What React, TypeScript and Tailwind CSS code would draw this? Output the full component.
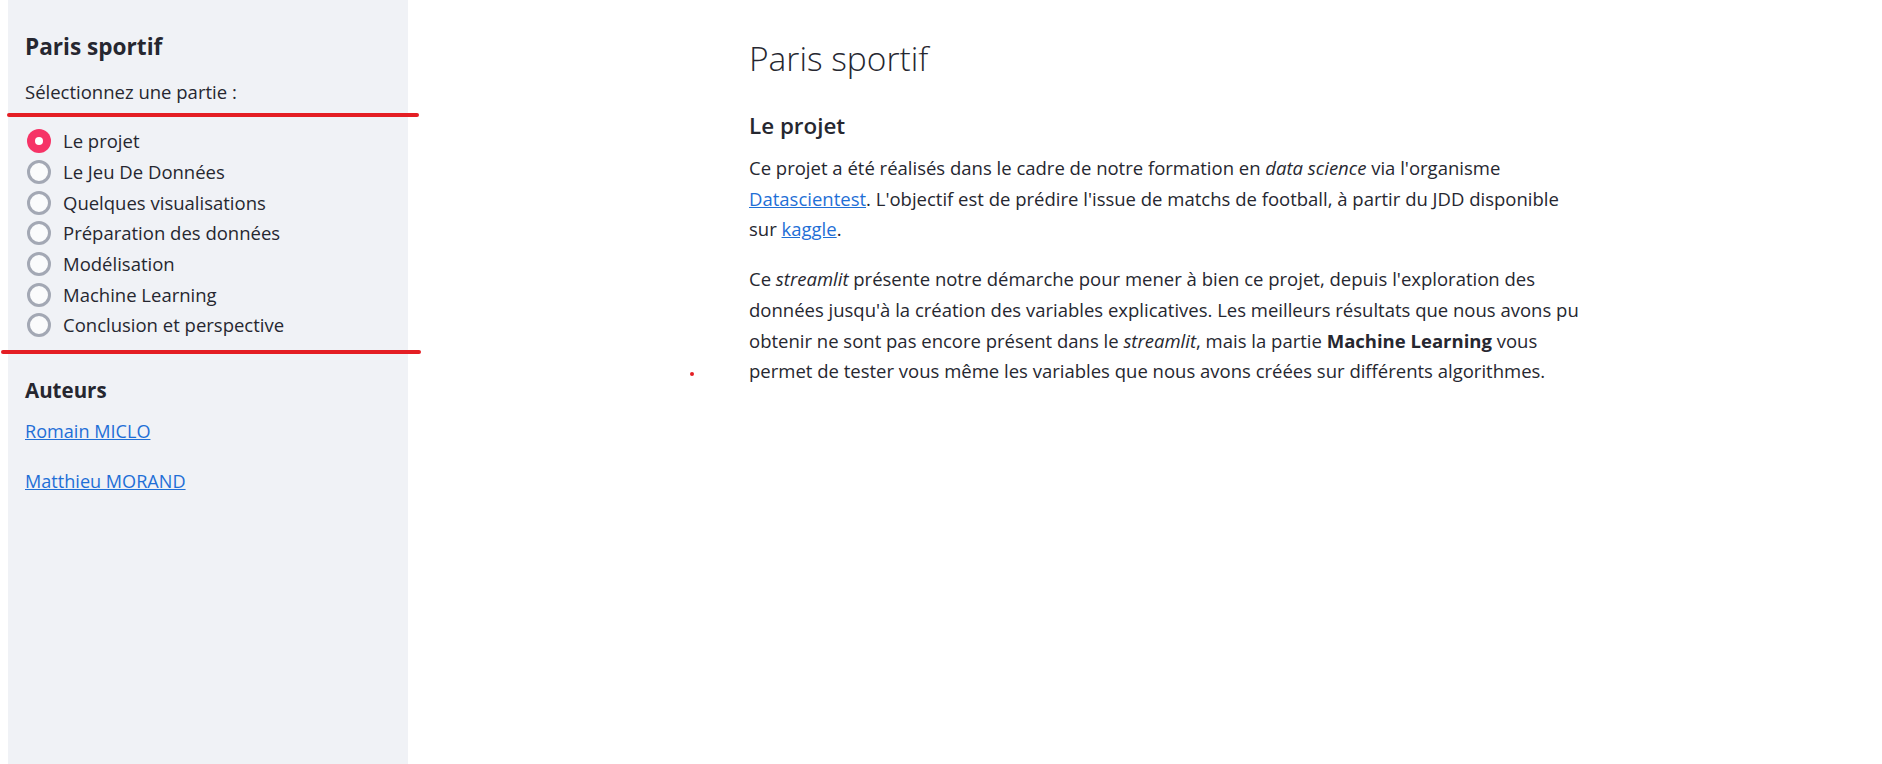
import React from "react";

const items = [
  "Le projet",
  "Le Jeu De Données",
  "Quelques visualisations",
  "Préparation des données",
  "Modélisation",
  "Machine Learning",
  "Conclusion et perspective",
];

function Radio({ checked }: { checked: boolean }) {
  if (checked) {
    return (
      <span className="flex h-[24px] w-[24px] shrink-0 items-center justify-center rounded-full bg-[#f63366]">
        <span className="h-[8px] w-[8px] rounded-full bg-white" />
      </span>
    );
  }
  return (
    <span className="block h-[24px] w-[24px] shrink-0 rounded-full border-[3px] border-[#a3a8b4] bg-[#fafbfc]" />
  );
}

export default function App() {
  return (
    <div
      className="relative flex min-h-[764px] w-full bg-white text-[#262730]"
      style={{ fontFamily: '"Open Sans", "Noto Sans", sans-serif' }}
    >
      <aside className="ml-[8px] flex min-h-[764px] w-[400px] shrink-0 flex-col bg-[#f0f2f6] pl-[17px] pt-[32px]">
        <h2 className="text-[22.6px] font-bold leading-[30px]">Paris sportif</h2>
        <p className="mt-[15px] text-[18.5px] leading-[30px]">Sélectionnez une partie :</p>
        <div className="mt-[19px] flex flex-col">
          {items.map((it, i) => (
            <div key={it} className="flex h-[30.67px] items-center gap-[12px] pl-[2px]">
              <Radio checked={i === 0} />
              <span className="text-[18.5px] leading-[30px]">{it}</span>
            </div>
          ))}
        </div>
        <h3 className="mt-[35px] text-[20.5px] font-bold leading-[28px]">Auteurs</h3>
        <a href="#" className="mt-[12px] self-start text-[18.1px] leading-[30px] text-[#1f6fd6] underline">
          Romain MICLO
        </a>
        <a href="#" className="mt-[20px] self-start text-[18.1px] leading-[30px] text-[#1f6fd6] underline">
          Matthieu MORAND
        </a>
      </aside>

      <main className="flex-1 pl-[341px] pt-[36px]">
        <h1 className="text-[33.5px] font-light leading-[44px]">Paris sportif</h1>
        <h3 className="mt-[31px] text-[22.4px] font-semibold leading-[30px]">Le projet</h3>
        <p className="mt-[12px] text-[18.5px] leading-[30.7px]">
          Ce projet a été réalisés dans le cadre de notre formation en <em>data science</em> via l'organisme
          <br />
          <a href="#" className="text-[#1f6fd6] underline">Datascientest</a>. L'objectif est de prédire l'issue de matchs de football, à partir du JDD disponible
          <br />
          sur <a href="#" className="text-[#1f6fd6] underline">kaggle</a>.
        </p>
        <p className="mt-[19px] text-[18.5px] leading-[30.7px]">
          Ce <em>streamlit</em> présente notre démarche pour mener à bien ce projet, depuis l'exploration des
          <br />
          données jusqu'à la création des variables explicatives. Les meilleurs résultats que nous avons pu
          <br />
          obtenir ne sont pas encore présent dans le <em>streamlit</em>, mais la partie <strong>Machine Learning</strong> vous
          <br />
          permet de tester vous même les variables que nous avons créées sur différents algorithmes.
        </p>
      </main>

      <div className="absolute left-[7px] top-[113px] h-[4px] w-[412px] rounded-full bg-[#e41e24]" />
      <div className="absolute left-[1px] top-[350px] h-[4px] w-[420px] rounded-full bg-[#e41e24]" />
      <div className="absolute left-[690px] top-[372px] h-[4px] w-[4px] rounded-full bg-[#e41e24]" />
    </div>
  );
}
